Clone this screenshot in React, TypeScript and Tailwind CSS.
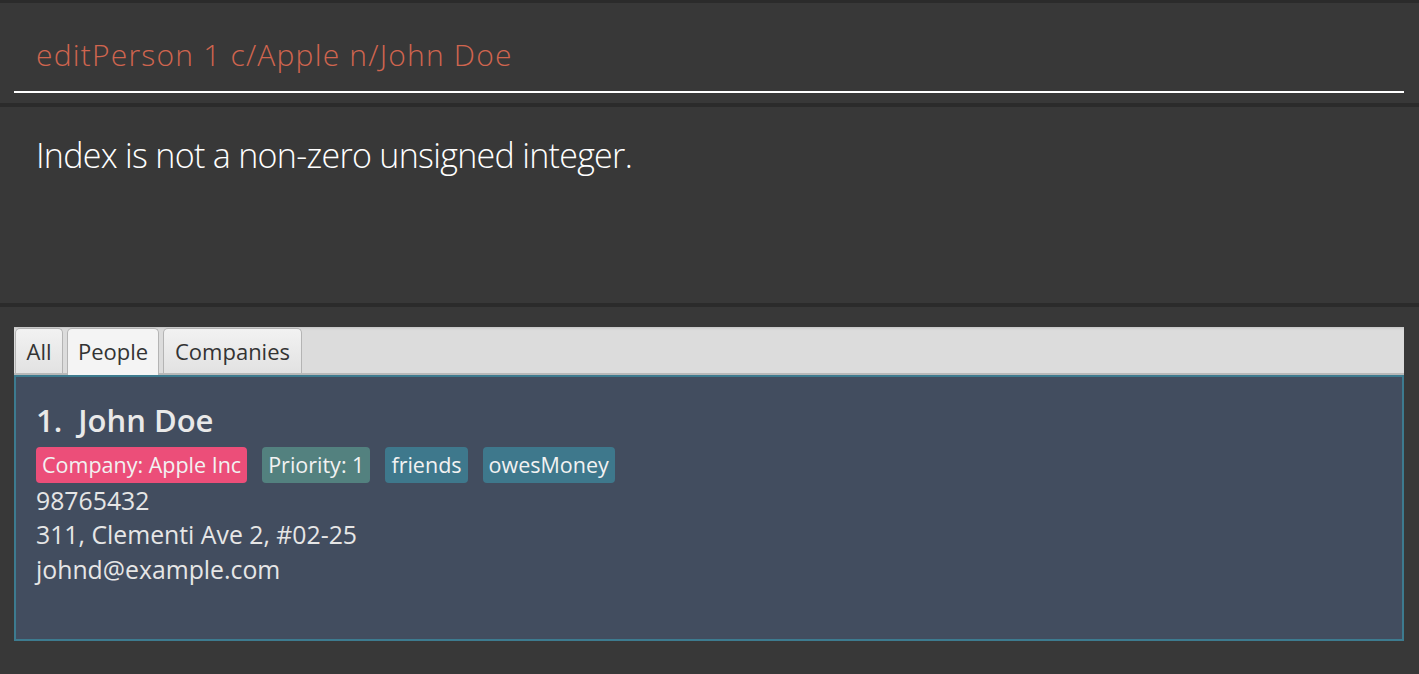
import React from "react";

const font = { fontFamily: '"Open Sans", "Noto Sans", sans-serif' };

function Tag({ children, color }: { children: React.ReactNode; color: string }) {
  return (
    <div
      className={`h-[36px] flex items-center px-[6px] rounded-[4px] text-[21.5px] font-medium text-[#f2f2f2] ${color}`}
    >
      {children}
    </div>
  );
}

export default function App() {
  return (
    <div
      className="w-[1419px] h-[674px] bg-[#383838] flex flex-col overflow-hidden"
      style={font}
    >
      <div className="h-[3px] bg-[#2b2b2b]" />
      {/* command box */}
      <div className="h-[100px] pl-[14px] pr-[15px] flex flex-col">
        <div className="pt-[37px] pl-[22px] text-[30px] leading-none font-light tracking-[1.2px] text-[#d0654f]">
          editPerson 1 c/Apple n/John Doe
        </div>
        <div className="mt-auto mb-[10px] h-[2px] bg-white" />
      </div>
      <div className="h-[4px] bg-[#2b2b2b]" />
      {/* result */}
      <div className="h-[196px] pl-[36px] pt-[31px] text-[34px] leading-none font-light tracking-[-0.7px] text-white">
        Index is not a non-zero unsigned integer.
      </div>
      <div className="h-[4px] bg-[#2b2b2b]" />
      {/* list panel */}
      <div className="flex-1 pl-[14px] pr-[15px] pt-[20px]">
        <div className="h-[48px] bg-[#dcdcdc] flex flex-col shadow-[inset_0_3px_3px_-2px_rgba(0,0,0,0.12)]">
          <div className="flex-1 flex items-end gap-[4px] pl-[1px]">
            <div className="w-[48px] h-[45px] rounded-t-[5px] border border-b-0 border-[#b4b4b4] bg-gradient-to-b from-[#f2f2f2] to-[#e2e2e2] flex items-center justify-center text-[22px] text-[#333]">
              All
            </div>
            <div className="w-[92px] h-[47px] -mb-[2px] rounded-t-[5px] border border-b-0 border-[#b4b4b4] bg-[#f4f4f4] flex items-center justify-center pb-[2px] text-[22px] text-[#333] relative z-10">
              People
            </div>
            <div className="w-[139px] h-[45px] rounded-t-[5px] border border-b-0 border-[#b4b4b4] bg-gradient-to-b from-[#f2f2f2] to-[#e2e2e2] flex items-center justify-center text-[22px] text-[#333]">
              Companies
            </div>
          </div>
          <div className="h-[2px] bg-[#b8b8b8]" />
        </div>
        <div className="h-[266px] border-2 border-[#3d7b8f] bg-[#424d5f] px-[20px] pt-[28px]">
          <div className="text-[31px] leading-none font-semibold text-[#e9e9e9]">
            1.&nbsp;&nbsp;John Doe
          </div>
          <div className="flex gap-[15px] mt-[11px]">
            <Tag color="bg-[#ec4e79]">Company: Apple Inc</Tag>
            <Tag color="bg-[#53817f]">Priority: 1</Tag>
            <Tag color="bg-[#3e788c]">friends</Tag>
            <Tag color="bg-[#3e788c]">owesMoney</Tag>
          </div>
          <div className="text-[24.8px] leading-[34.3px] text-[#e6e6e6]">
            <div>98765432</div>
            <div>311, Clementi Ave 2, #02-25</div>
            <div>johnd@example.com</div>
          </div>
        </div>
      </div>
    </div>
  );
}
